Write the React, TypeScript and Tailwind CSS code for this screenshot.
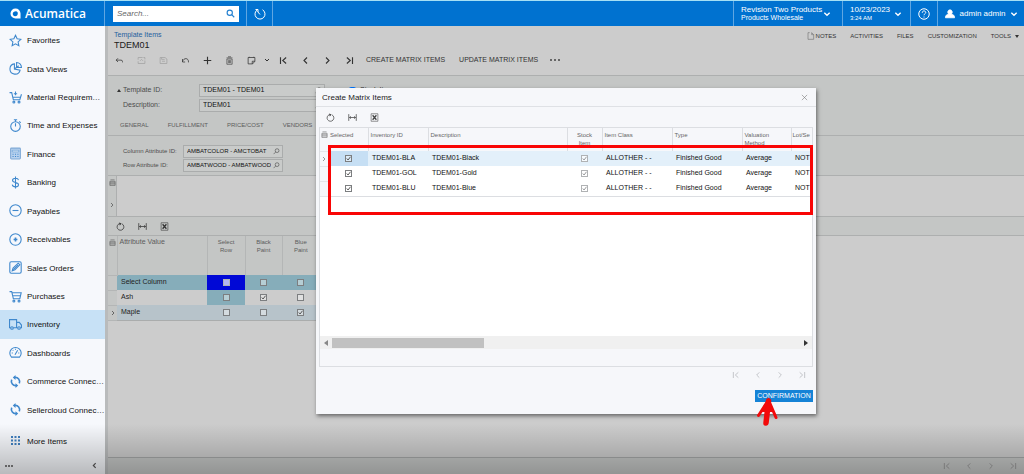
import React from "react";
import clsx from "clsx";

const P: Record<string, React.ReactNode> = {
   star: <path d="M12 2.5l3 6.4 7 .9-5.2 4.8 1.4 7L12 18.200l-6.200 3.400 1.400-7L2 9.800l7-.9z" />,
   pie: (
      <>
         <path d="M10 3.500a9.500 9.500 0 1 0 10.500 11.500L10 13z" />
         <path d="M14 1v9h9a9 9 0 0 0-9-9z" />
         <path d="M10 13l8-6" />
      </>
   ),
   cartPlus: (
      <>
         <path d="M1 3h4l3 13h12l3-10M6.500 11.500H21M12 1v7M9 5h6" />
         <circle cx="9" cy="20.500" r="1.800" />
         <circle cx="18.500" cy="20.500" r="1.800" />
      </>
   ),
   timer: (
      <>
         <circle cx="12" cy="14" r="8.800" />
         <path d="M12 14V8M9 1.500h6M12 2v3M19 4.500l2.500 2.500" />
      </>
   ),
   calc: (
      <>
         <rect x="3" y="2" width="18" height="20" rx="1.500" fill="#b9d2ee" stroke="#7fa9d6" />
         <path d="M6 6h12v3H6z" fill="#f4f6fb" strokeWidth="1" />
         <path d="M6.500 13.500h2M11 13.500h2M15.500 13.500h2M6.500 17.500h2M11 17.500h2M15.500 17.500h2" />
      </>
   ),
   dollar: <path d="M12 1v22M17.500 7.500C17 5 15 4 12 4S6.500 5.300 6.500 8c0 5.500 11 2.500 11 8 0 2.700-2.500 4-5.500 4s-5.500-1.300-6-4" />,
   minus: (
      <>
         <circle cx="12" cy="12" r="10.500" />
         <path d="M6.500 12h11" />
      </>
   ),
   plusCircle: (
      <>
         <circle cx="12" cy="12" r="10.500" />
         <path d="M8.500 12h7M12 8.500v7" strokeWidth="3" />
      </>
   ),
   edit: (
      <>
         <rect x="1.500" y="1.500" width="21" height="21" rx="2.500" />
         <path d="M6 18l1.500-5L17 4l3 3-9 9z" />
         <path d="M8 16L17 7" />
      </>
   ),
   cart: (
      <>
         <path d="M1 3h4l3 13h12l2.500-11H6M7 10.500h14" />
         <circle cx="9" cy="20.500" r="1.800" />
         <circle cx="18.500" cy="20.500" r="1.800" />
      </>
   ),
   truck: (
      <>
         <path d="M3 18H1V3h13v15H8M14 8h5l4 5v5h-2M14 18h2" />
         <circle cx="5.500" cy="18.500" r="2.400" />
         <circle cx="18.500" cy="18.500" r="2.400" />
      </>
   ),
   gauge: (
      <>
         <path d="M4.500 20.500a10.500 10.500 0 1 1 15 0z" />
         <path d="M11 16l5-8M5 13h2M17 13h2M12 5v2M7 7.500l1 1" />
      </>
   ),
   sync: (
      <>
         <path d="M10 4.500a8 8 0 0 1 9 11M14 19.500a8 8 0 0 1-9-11" strokeWidth="3" />
         <path d="M12 0v9L7 4.500zM12 15v9l5-4.500z" fill="currentColor" stroke="none" />
      </>
   ),
   back: <path d="M8 6l-5 5 5 5M3 11h13a4 4 0 0 1 4 4v2" />,
   save: <path d="M3 4h13l5 4v12H3zM7 4v5h8M8 14h8" />,
   saveClose: <path d="M3 10V4h12M21 12v8H3v-6M8 13l4-4 4 4M17 4h4v5" />,
   undo: <path d="M4 8v8h7M4 15C7 4 21 4 20 17" />,
   plus: <path d="M12 2v20M2 12h20" />,
   trash: <path d="M4 5h16M8 2h8M5 8h14v14H5zM9 11v8M12 11v8M15 11v8" strokeWidth="1.600" />,
   note: <path d="M3 4h18v10l-6 7H3zM14 21v-7h7M6 4v-2M18 4v-2" />,
   first: <path d="M4 3v18M19 4l-9 8 9 8" />,
   prev: <path d="M16 4l-8 8 8 8" />,
   next: <path d="M8 4l8 8-8 8" />,
   last: <path d="M20 3v18M5 4l9 8-9 8" />,
   down: <path d="M4 8l8 8 8-8" />,
   refresh: (
      <>
         <path d="M9 4.500a9 9 0 1 0 7 .5" />
         <path d="M8 1l7 3-5 5z" fill="currentColor" stroke="none" />
      </>
   ),
   fit: <path d="M2 3v18M22 3v18M4 12h16M8 9l-4 3 4 3M16 9l4 3-4 3" />,
   excel: (
      <>
         <path d="M3 2h18v20H3z" strokeWidth="1.500" />
         <path d="M7 6l10 12M17 6L7 18" strokeWidth="3.500" />
      </>
   ),
   grid: <path d="M3 8h18v14H3zM5 3h14M3 13h18M3 17h18" />,
   search: (
      <>
         <circle cx="10" cy="10" r="7" />
         <path d="M15 15l7 7" />
      </>
   ),
   lookup: (
      <>
         <circle cx="14" cy="9" r="6.500" />
         <path d="M9 14l-7 7" />
      </>
   ),
   close: <path d="M3 3l18 18M21 3L3 21" />,
   help: (
      <>
         <circle cx="12" cy="12" r="10.500" />
         <path d="M8.500 9.500c0-5 7-4.500 7-.5 0 2.500-3.500 2.500-3.500 5.500M12 17v2" />
      </>
   ),
   history: <path d="M7 3.500A10 10 0 1 0 17 3.500M12 13L7 7M3 3h5v5" />,
   user: <path d="M12 2a5.500 5.500 0 0 1 3 10c5 1.500 8 3 8 9H1c0-6 3-7.500 8-9a5.500 5.500 0 0 1 3-10z" fill="currentColor" />,
   page: <path d="M8 2H3v20M3 22h17V8l-6-6v6h6" />,
};

interface IconProps {
   name: string;
   size?: number;
   weight?: number;
   className?: string;
}

const Icon: React.FC<IconProps> = ({ name, size = 9, weight = 2, className }) => (
   <svg
      viewBox="0 0 24 24"
      width={size}
      height={size}
      fill="none"
      stroke="currentColor"
      strokeWidth={weight}
      className={clsx("shrink-0", className)}
      aria-hidden="true"
   >
      {P[name]}
   </svg>
);

const IconButton: React.FC<IconProps & { label: string }> = ({ label, className, ...rest }) => (
   <button
      type="button"
      aria-label={label}
      className={clsx("flex w-[22px] shrink-0 items-center justify-center", className)}
   >
      <Icon {...rest} />
   </button>
);

const Tick: React.FC<{ label: string; checked?: boolean; muted?: boolean }> = ({
   label,
   checked = false,
   muted = false,
}) => (
   <span className="inline-grid place-items-center align-middle">
      <input
         type="checkbox"
         aria-label={label}
         defaultChecked={checked}
         className={clsx(
            "peer col-start-1 row-start-1 size-[7px] appearance-none border",
            muted ? "border-[#b0b2b4] bg-white/70" : "border-[#7c7e80] bg-white/40"
         )}
      />
      <svg
         viewBox="0 0 8 8"
         className={clsx(
            "pointer-events-none invisible col-start-1 row-start-1 size-[7px] fill-none peer-checked:visible",
            muted ? "stroke-[#8a8c8e]" : "stroke-[#444]"
         )}
      >
         <path d="M2 4l1.500 1.700L6.300 2" />
      </svg>
   </span>
);

const navItems = [
   ["Favorites", "star"],
   ["Data Views", "pie"],
   ["Material Requirem…", "cartPlus"],
   ["Time and Expenses", "timer"],
   ["Finance", "calc"],
   ["Banking", "dollar"],
   ["Payables", "minus"],
   ["Receivables", "plusCircle"],
   ["Sales Orders", "edit"],
   ["Purchases", "cart"],
   ["Inventory", "truck"],
   ["Dashboards", "gauge"],
   ["Commerce Connec…", "sync"],
   ["Sellercloud Connec…", "sync"],
];

const attributeRows = [
   { name: "Select Column", row: false, black: false, blue: false },
   { name: "Ash", row: false, black: true, blue: false },
   { name: "Maple", row: false, black: false, blue: true },
];

const matrixItems = [
   { id: "TDEM01-BLA", description: "TDEM01-Black" },
   { id: "TDEM01-GOL", description: "TDEM01-Gold" },
   { id: "TDEM01-BLU", description: "TDEM01-Blue" },
];

const Header = () => (
   <header className="flex h-[26px] border-t border-[#a5e0f5] bg-[#0072d0] text-white">
      <div className="flex w-[105px] shrink-0 items-center gap-1 border-r border-[#5fa6e2] pl-[10px]">
         <svg viewBox="0 0 24 24" className="size-[11px]">
            <path
               fillRule="evenodd"
               fill="#fff"
               d="M12 1a11 11 0 0 1 11 11v11H12A11 11 0 0 1 12 1zm1 6c-4 0-7 2-7 5.500S8 18 11 18c4 0 6-3 6-6s-1-5-4-5z"
            />
         </svg>
         <span className="font-['Open_Sans',sans-serif] text-[12px] font-semibold">Acumatica</span>
      </div>
      <div className="flex w-[142px] items-center border-r border-[#5fa6e2] pl-2">
         <div className="flex h-4 w-[126px] items-center bg-white px-1">
            <input
               aria-label="Search"
               placeholder="Search..."
               className="w-full min-w-0 text-[8px] text-black italic outline-none placeholder:text-[#666]"
            />
            <Icon name="search" size={9} weight={3} className="text-[#2581d0]" />
         </div>
      </div>
      <button type="button" aria-label="Recent" className="flex w-[26px] items-center justify-center border-r border-[#5fa6e2]">
         <Icon name="history" size={12} />
      </button>
      <div className="flex-1" />
      <button type="button" className="flex w-[109px] items-center border-l border-[#5fa6e2] pl-[7px] text-left">
         <span className="w-[82px] whitespace-nowrap">
            <span className="block text-[8px] leading-2">Revision Two Products</span>
            <span className="block text-[7px] leading-2">Products Wholesale</span>
         </span>
         <Icon name="down" size={8} weight={4} />
      </button>
      <button type="button" className="flex w-[68px] items-center border-l border-[#5fa6e2] pl-[7px] text-left">
         <span className="w-11 whitespace-nowrap">
            <span className="block text-[8px] leading-2">10/23/2023</span>
            <span className="block text-[6px] leading-2">3:24 AM</span>
         </span>
         <Icon name="down" size={8} weight={4} />
      </button>
      <button type="button" aria-label="Help" className="flex w-[27px] items-center justify-center border-l border-[#5fa6e2]">
         <Icon name="help" size={12} />
      </button>
      <button type="button" className="flex w-[87px] items-center justify-between border-l border-[#5fa6e2] pr-[6px] pl-[7px] text-[8px] whitespace-nowrap">
         <Icon name="user" size={10} />
         admin admin
         <Icon name="down" size={8} weight={4} />
      </button>
   </header>
);

const Sidebar = () => (
   <nav className="flex w-[105px] shrink-0 flex-col bg-[#f6f8fc] text-[8px] text-[#111]">
      {navItems.map(([label, icon]) => (
         <a
            href="#"
            key={label}
            className={clsx(
               "flex flex-1 items-center gap-[5px] pl-[9px] whitespace-nowrap",
               label === "Inventory" && "bg-[#c7e1f6]"
            )}
         >
            <Icon name={icon} size={13} className="text-[#3f88cd]" />
            <span className="pt-[2px]">{label}</span>
         </a>
      ))}
      <a href="#" className="flex h-[34px] items-center gap-[5px] pl-[9px]">
         <svg viewBox="0 0 13 13" className="size-[13px] fill-[#3f7fc0]">
            {[2, 5.500, 9].map((y) =>
               [2, 5.500, 9].map((x) => <rect key={`${x}-${y}`} x={x} y={y} width="2" height="2" />)
            )}
         </svg>
         <span className="pt-[2px]">More Items</span>
      </a>
      <div className="flex h-4 items-center justify-between pr-[7px] pl-1 text-[#555]">
         <button type="button" aria-label="Menu" className="flex gap-px p-px">
            <i className="size-[2px] rounded-full bg-[#555]" />
            <i className="size-[2px] rounded-full bg-[#555]" />
            <i className="size-[2px] rounded-full bg-[#555]" />
         </button>
         <button type="button" aria-label="Collapse">
            <Icon name="prev" size={7} weight={4} />
         </button>
      </div>
   </nav>
);

const GridTools = () => (
   <>
      <IconButton label="Refresh" name="refresh" />
      <IconButton label="Fit columns" name="fit" />
      <IconButton label="Export" name="excel" />
   </>
);

const Pager = () => (
   <>
      <IconButton label="First" name="first" size={8} weight={3} />
      <IconButton label="Previous" name="prev" size={8} weight={3} />
      <IconButton label="Next" name="next" size={8} weight={3} />
      <IconButton label="Last" name="last" size={8} weight={3} />
   </>
);

const Field: React.FC<{ id: string; label: string; value: string; narrow?: boolean }> = ({
   id,
   label,
   value,
   narrow,
}) => (
   <div className={clsx("flex h-[13px] items-center", narrow ? "text-[6px]" : "text-[7px]")}>
      <label htmlFor={id} className={clsx("shrink-0 whitespace-nowrap text-[#4c4c4c]", narrow ? "w-[60px]" : "w-[76px]")}>
         {label}
      </label>
      <div
         className={clsx(
            "flex h-[13px] items-center border border-[#aaacac] bg-[#c9cbca] pr-[2px] pl-[3px]",
            narrow ? "w-[100px]" : "w-[126px]"
         )}
      >
         <input id={id} defaultValue={value} className="w-full min-w-0 text-[#111] outline-none" />
         <Icon name="lookup" size={7} className="ml-[2px] text-[#444]" />
      </div>
   </div>
);

const AttributeTable = () => (
   <table className="w-[211px] table-fixed border-collapse border-b border-[#aaacac] text-[7px] text-[#222]">
      <colgroup>
         <col className="w-[9px]" />
         <col className="w-[90px]" />
         <col className="w-[38px]" />
         <col className="w-[37px]" />
         <col className="w-[37px]" />
      </colgroup>
      <thead>
         <tr className="h-[39px] bg-[#c4c6c5] align-top text-[#5c5c5c]">
            <th>
               <Icon name="grid" size={7} className="mx-auto mt-[3px]" />
            </th>
            <th className="border-x border-[#b4b6b6] pt-px pl-[2px] text-left text-[7px] font-normal">
               Attribute Value
            </th>
            <th className="border-r border-[#b4b6b6] px-2 pt-[2px] text-[6px] leading-2 font-normal">Select Row</th>
            <th className="border-r border-[#b4b6b6] px-2 pt-[2px] text-[6px] leading-2 font-normal">Black Paint</th>
            <th className="px-2 pt-[2px] text-[6px] leading-2 font-normal">Blue Paint</th>
         </tr>
      </thead>
      <tbody>
         {attributeRows.map(({ name, row, black, blue }, i) => (
            <tr
               key={name}
               className={clsx("h-[15px] text-center", i === 0 && "bg-[#86adba]", i === 2 && "bg-[#b7c3ca]")}
            >
               <td className="border-y border-[#b4b6b6] bg-[#c4c6c5]">
                  {i === 2 && <Icon name="next" size={6} weight={3} className="mx-auto text-[#444]" />}
               </td>
               <td className="pl-1 text-left">{name}</td>
               <td className={clsx(i === 0 && "bg-[#0008d6]", i === 1 && "bg-[#86adba]")}>
                  <Tick label={`${name} row`} checked={row} muted={i === 0} />
               </td>
               <td>
                  <Tick label={`${name} black paint`} checked={black} />
               </td>
               <td>
                  <Tick label={`${name} blue paint`} checked={blue} />
               </td>
            </tr>
         ))}
      </tbody>
   </table>
);

const headCell = "border-r border-[#dcdee2] pt-[3px] font-normal";

const MatrixDialog = () => (
   <div
      role="dialog"
      aria-label="Create Matrix Items"
      className="relative flex h-[326px] w-[500px] flex-col bg-[#f6f7fa] shadow-[1px_2px_4px_rgba(0,0,0,0.5)]"
   >
      <div className="flex h-[19px] shrink-0 items-center justify-between border-b border-[#dfe1e5] pr-2 pl-[6px]">
         <h2 className="pt-px text-[8px] text-[#222]">Create Matrix Items</h2>
         <button type="button" aria-label="Close" className="text-[#777]">
            <Icon name="close" size={7} />
         </button>
      </div>
      <div className="flex h-5 shrink-0 items-center pl-[3px] text-[#444]">
         <GridTools />
      </div>
      <div className="mx-[3px] flex h-60 flex-col border border-[#dcdee2]">
         <div className="flex-1 overflow-hidden bg-white">
            <table className="w-full table-fixed border-collapse border-b border-[#dcdee2] text-[7px] text-[#111]">
               <colgroup>
                  <col className="w-2" />
                  <col className="w-10" />
                  <col className="w-[60px]" />
                  <col />
                  <col className="w-[35px]" />
                  <col className="w-[70px]" />
                  <col className="w-[70px]" />
                  <col className="w-[49px]" />
                  <col className="w-[21px]" />
               </colgroup>
               <thead>
                  <tr className="h-[23px] bg-[#f6f7fa] text-left align-top text-[6px] leading-2 text-[#666]">
                     <th className="pt-[3px]">
                        <Icon name="grid" size={7} className="mx-auto" />
                     </th>
                     <th className={clsx(headCell, "px-[2px]")}>Selected</th>
                     <th className={clsx(headCell, "px-[2px]")}>Inventory ID</th>
                     <th className={clsx(headCell, "px-[2px]")}>Description</th>
                     <th className={clsx(headCell, "px-2 text-center")}>Stock Item</th>
                     <th className={clsx(headCell, "px-[2px]")}>Item Class</th>
                     <th className={clsx(headCell, "px-[2px]")}>Type</th>
                     <th className={clsx(headCell, "px-[2px]")}>Valuation Method</th>
                     <th className="pt-[3px] pl-px font-normal whitespace-nowrap">Lot/Se</th>
                  </tr>
               </thead>
               <tbody>
                  {matrixItems.map(({ id, description }, i) => (
                     <tr key={id} className={clsx("h-[15px] whitespace-nowrap", i === 0 && "bg-[#e3f0fa]")}>
                        <td className="border-y border-[#e3e5e9] bg-[#f6f7fa]">
                           {i === 0 && <Icon name="next" size={6} weight={3} className="mx-auto text-[#777]" />}
                        </td>
                        <td className={clsx("text-center", i === 0 && "bg-[#c6dff4]")}>
                           <Tick label={`Select ${id}`} checked />
                        </td>
                        <td className="pl-1">{id}</td>
                        <td className="pl-1">{description}</td>
                        <td className="text-center">
                           <Tick label={`${id} stock item`} checked muted />
                        </td>
                        <td className="pl-1">ALLOTHER - -</td>
                        <td className="pl-1">Finished Good</td>
                        <td className="pl-1">Average</td>
                        <td className="pl-1">NOT</td>
                     </tr>
                  ))}
               </tbody>
            </table>
         </div>
         <div className="flex h-[13px] items-center gap-1 bg-[#f0f0f0] px-1">
            <svg viewBox="0 0 4 6" className="h-[6px] w-1 fill-[#888]">
               <path d="M4 0v6L0 3z" />
            </svg>
            <div className="flex-1">
               <div className="h-[10px] w-[152px] bg-[#c1c1c1]" />
            </div>
            <svg viewBox="0 0 4 6" className="h-[6px] w-1 fill-[#333]">
               <path d="M0 0v6l4-3z" />
            </svg>
         </div>
         <div className="h-[17px]" />
      </div>
      <div className="flex h-4 shrink-0 items-center justify-end pr-[3px] text-[#c4c6ca]">
         <Pager />
      </div>
      <div className="flex flex-1 items-start justify-end pt-[7px] pr-[3px]">
         <button type="button" className="h-3 w-[58px] bg-[#1583d6] text-[7px] leading-3 text-white">
            CONFIRMATION
         </button>
      </div>

      {/* callouts */}
      <div className="pointer-events-none absolute top-[57px] right-[3px] left-3 h-[70px] border-3 border-[#f90505]" />
      <svg
         viewBox="0 0 22 30"
         className="pointer-events-none absolute top-[309px] left-[440px] h-[30px] w-[22px] fill-none stroke-[#f20a0a]"
         strokeLinecap="round"
      >
         <path d="M12.500 4L10 26" strokeWidth="5.500" />
         <path d="M12.500 3L2.500 18.500M12.500 3L20 20.500" strokeWidth="3" />
         <path d="M12.500 3L7 14h9z" strokeWidth="2" fill="#f20a0a" />
      </svg>
   </div>
);

const Workspace = () => (
   <main className="relative flex min-w-0 flex-1 flex-col border-l-3 border-[#b9bbbc] bg-[#ccc] text-[#333]">
      <div className="flex h-[25px] shrink-0 justify-between pt-1">
         <div className="pl-[6px]">
            <a href="#" className="block text-[7px] leading-[9px] text-[#1f5f9e]">
               Template Items
            </a>
            <h1 className="text-[9px] leading-3 text-[#1a1a1a]">TDEM01</h1>
         </div>
         <div className="flex h-3 items-center gap-[14px] pr-[5px] text-[6px] whitespace-nowrap">
            <a href="#" className="flex items-center gap-px">
               <Icon name="page" size={8} className="text-[#777]" />
               NOTES
            </a>
            <a href="#">ACTIVITIES</a>
            <a href="#">FILES</a>
            <a href="#">CUSTOMIZATION</a>
            <a href="#" className="flex items-center gap-1">
               TOOLS
               <svg viewBox="0 0 4 3" className="h-[3px] w-1 fill-[#333]">
                  <path d="M0 0h4L2 3z" />
               </svg>
            </a>
         </div>
      </div>
      <div className="flex h-[24px] shrink-0 items-start text-[7px] whitespace-nowrap">
         <div className="flex h-[18px] items-center">
            <IconButton label="Back" name="back" />
            <IconButton label="Save and close" name="saveClose" className="text-[#a2a2a2]" />
            <IconButton label="Save" name="save" className="text-[#a2a2a2]" />
            <IconButton label="Undo" name="undo" />
            <IconButton label="Add" name="plus" weight={3} />
            <IconButton label="Delete" name="trash" />
            <IconButton label="Copy" name="note" />
            <IconButton label="Copy options" name="down" size={6} weight={4} className="-mx-[6px]" />
            <IconButton label="First" name="first" weight={3} />
            <IconButton label="Previous" name="prev" weight={3} />
            <IconButton label="Next" name="next" weight={3} />
            <IconButton label="Last" name="last" weight={3} />
            <button type="button" className="pl-[6px]">CREATE MATRIX ITEMS</button>
            <button type="button" className="pl-[14px]">UPDATE MATRIX ITEMS</button>
            <button type="button" aria-label="More" className="flex gap-[2px] pl-3">
               <i className="size-[2px] rounded-full bg-[#444]" />
               <i className="size-[2px] rounded-full bg-[#444]" />
               <i className="size-[2px] rounded-full bg-[#444]" />
            </button>
         </div>
      </div>
      <div className="flex h-[61px] shrink-0 flex-col border-y border-[#adafaf] bg-[#c4c6c5] pt-2">
         <div className="flex">
            <svg viewBox="0 0 4 3" className="mt-[5px] ml-[9px] h-[3px] w-1 fill-[#333]">
               <path d="M0 3h4L2 0z" />
            </svg>
            <div className="flex flex-col gap-[2px] pl-[2px]">
               <Field id="template" label="Template ID:" value="TDEM01 - TDEM01" />
               <Field id="description" label="Description:" value="TDEM01" />
            </div>
            <label className="flex h-3 items-center gap-1 pl-6 text-[7px]">
               <input type="checkbox" defaultChecked className="size-[7px]" />
               Stock Item
            </label>
         </div>
         <div className="flex flex-1 items-center gap-[19px] pt-1 pl-3 text-[6px] text-[#5c5c5c]">
            <button type="button">GENERAL</button>
            <button type="button">FULFILLMENT</button>
            <button type="button">PRICE/COST</button>
            <button type="button">VENDORS</button>
         </div>
      </div>
      <div className="flex h-10 shrink-0 flex-col gap-px border-b border-[#adafaf] bg-[#c4c6c5] pt-[9px] pl-[15px]">
         <Field id="column-attribute" label="Column Attribute ID:" value="AMBATCOLOR - AMCTOBAT" narrow />
         <Field id="row-attribute" label="Row Attribute ID:" value="AMBATWOOD - AMBATWOOD" narrow />
      </div>
      <div className="flex h-10 shrink-0">
         <div className="flex w-[9px] flex-col items-center justify-between border-r border-[#adafaf] bg-[#c4c6c5] pt-[3px] pb-2 text-[#555]">
            <Icon name="grid" size={7} />
            <Icon name="next" size={6} weight={3} />
         </div>
      </div>
      <div className="flex h-5 shrink-0 items-center border-y border-[#adafaf] bg-[#c4c6c5] pl-px">
         <GridTools />
      </div>
      <div className="flex-1">
         <AttributeTable />
      </div>
      <div className="flex h-[17px] items-center justify-end border-t border-[#a5a7a7] bg-[#c4c6c5] text-[#999]">
         <Pager />
      </div>

      <div className="absolute inset-x-0 top-[62px] flex justify-center">
         <MatrixDialog />
      </div>
   </main>
);

export default function App() {
   return (
      <div className="relative flex min-h-screen flex-col font-['Liberation_Sans',Arial,sans-serif]">
         <Header />
         <div className="flex flex-1">
            <Sidebar />
            <Workspace />
         </div>
         <div className="pointer-events-none absolute inset-x-0 bottom-0 h-[50px] bg-linear-to-b from-transparent to-black/25" />
      </div>
   );
}
